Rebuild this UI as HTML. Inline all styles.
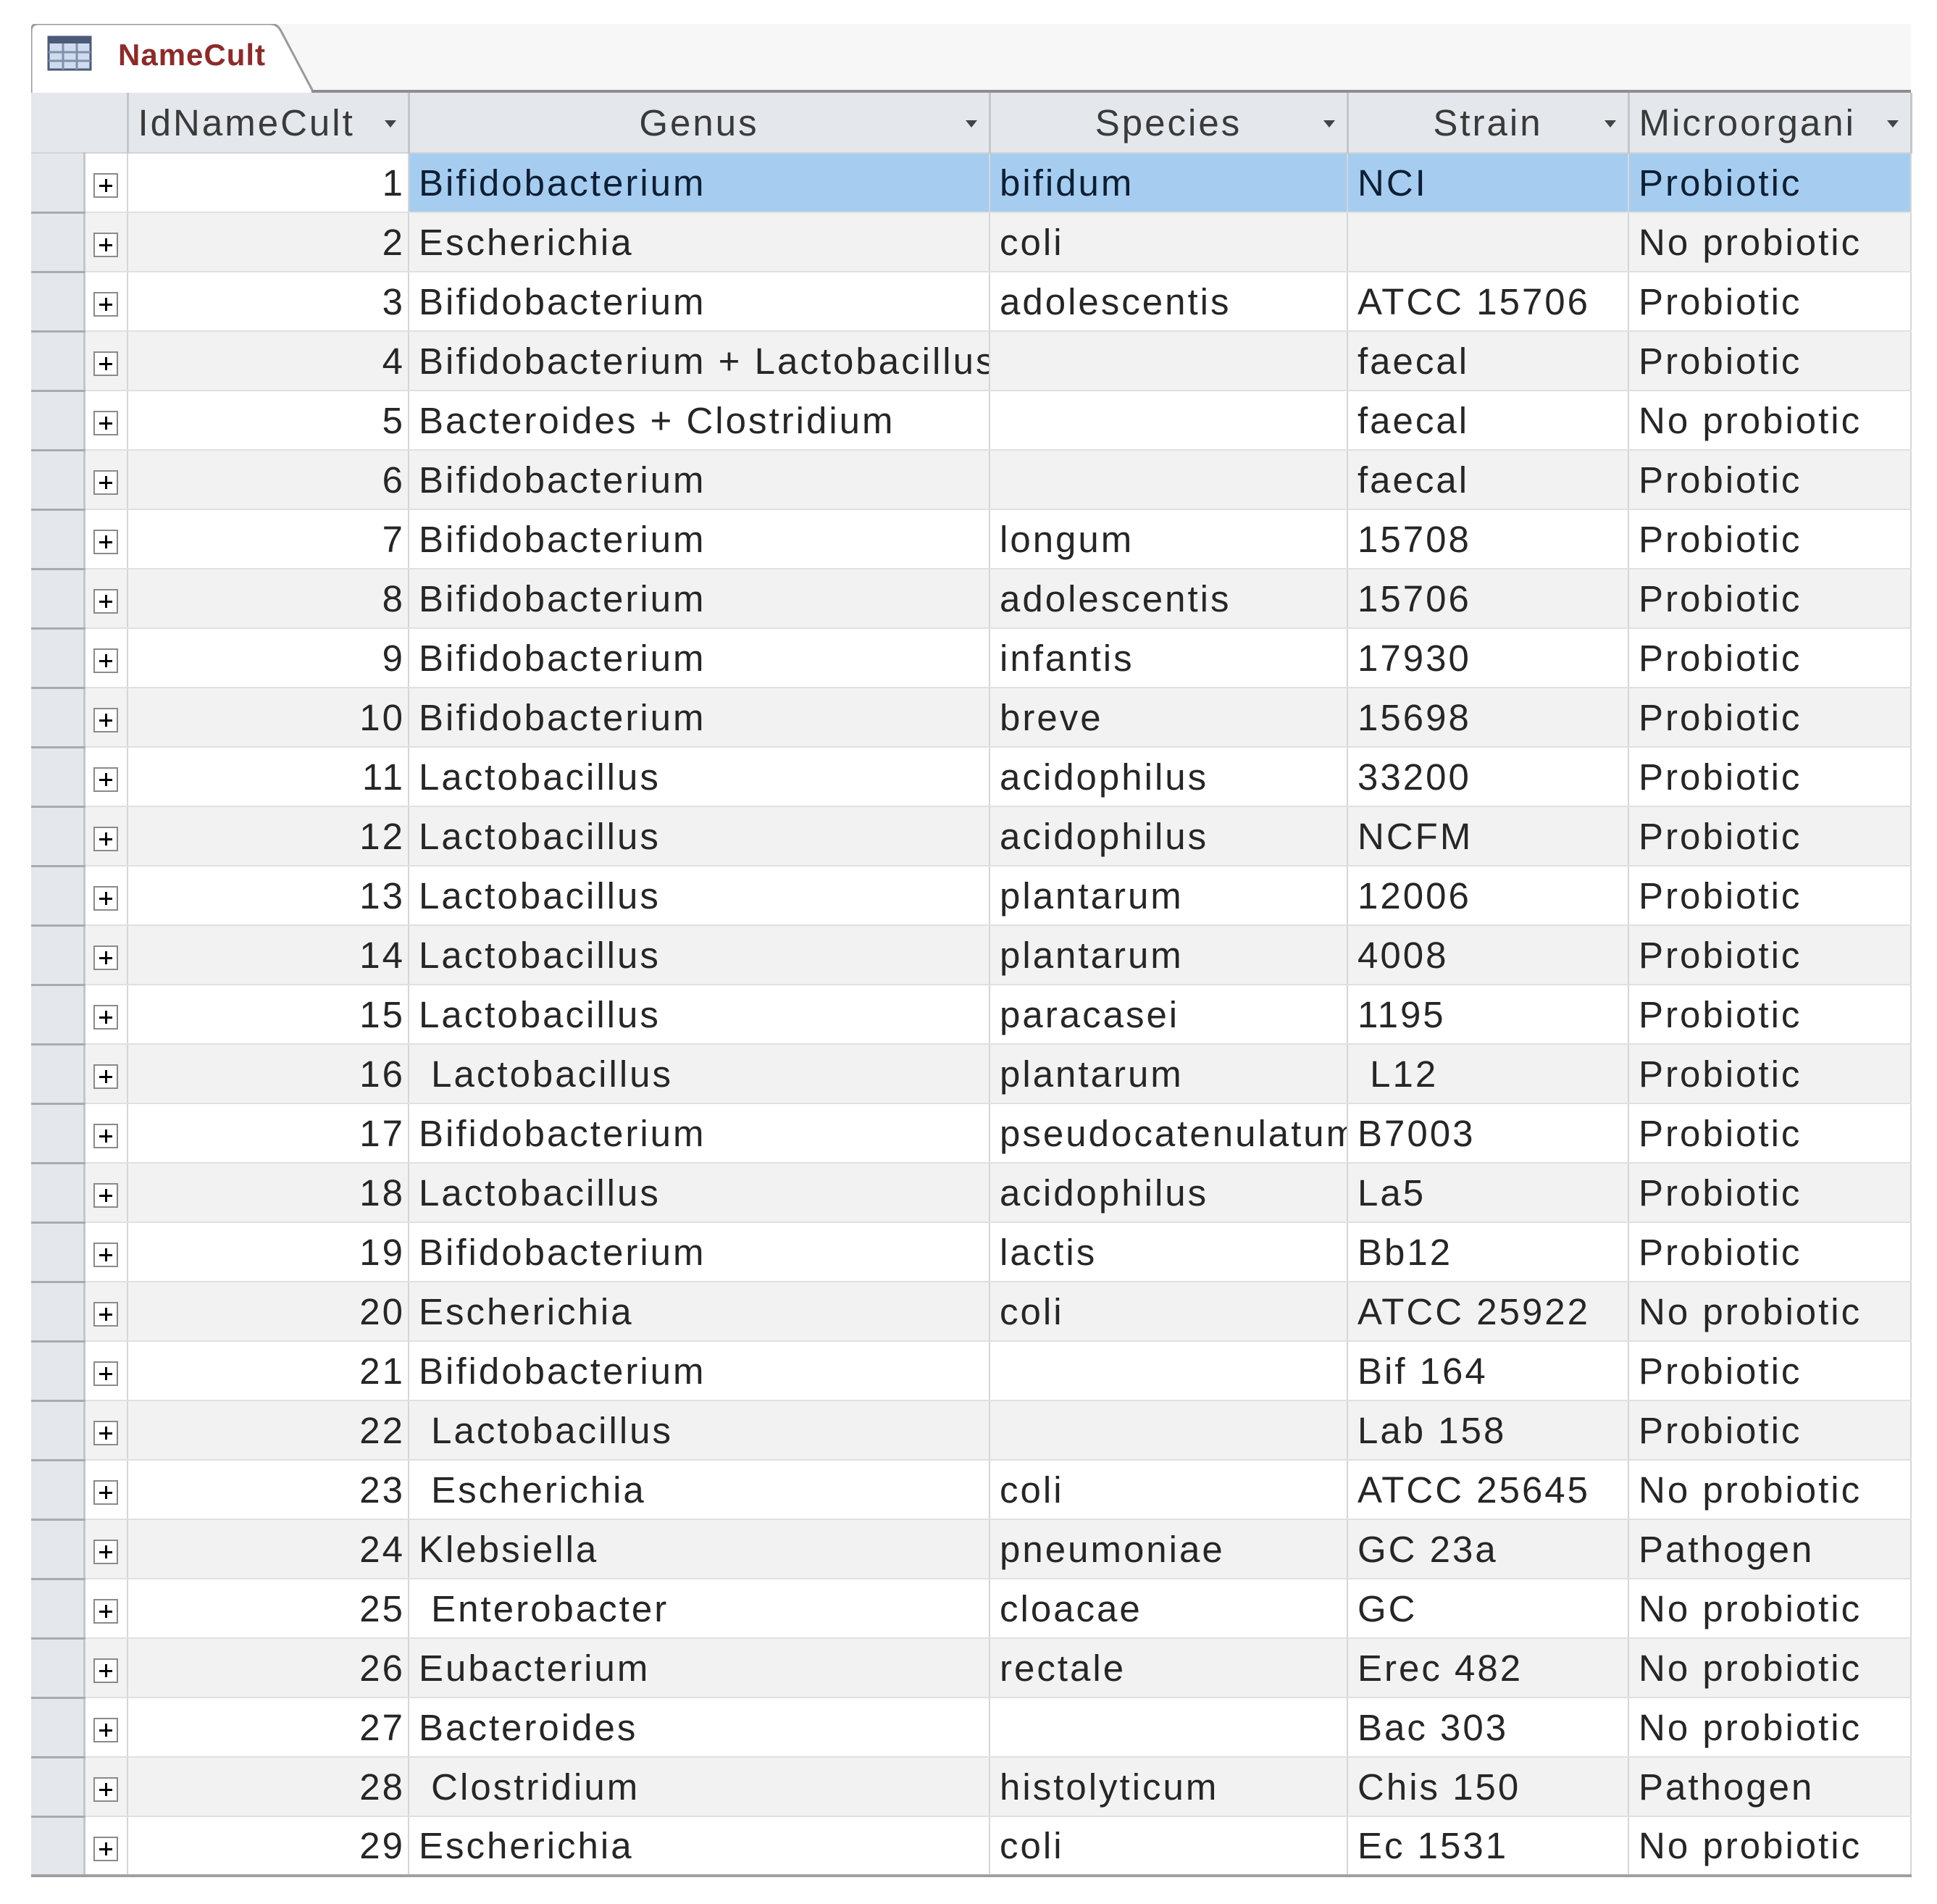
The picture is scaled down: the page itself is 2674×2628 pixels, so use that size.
<!DOCTYPE html>
<html><head><meta charset="utf-8"><style>
body{margin:0;width:2674px;height:2628px;background:#fff;position:relative;overflow:hidden;font-family:"Liberation Sans",sans-serif}
.tabbar{position:absolute;left:43px;top:33px;width:2595px;height:95px;background:#f7f7f7}
.tabline{position:absolute;left:430px;top:124px;width:2208px;height:4px;background:#8e8e8e}
.tab{position:absolute;left:43px;top:33px;width:390px;height:95px}
.tabtxt{position:absolute;left:163px;top:52px;font-size:42px;font-weight:bold;color:#8b2b2b;letter-spacing:1px}
table{position:absolute;left:43px;top:128px;border-collapse:collapse;table-layout:fixed;width:2595px}
td,th{padding:0;height:82px;font-size:51px;letter-spacing:3px;white-space:nowrap;overflow:hidden;color:#262626;font-weight:normal}
th{background:#e4e7ec;color:#3a3a3a;border-right:3px solid #c4c6c9;border-bottom:2px solid #d2d4d8;position:relative}
th.dd::after{content:"";position:absolute;right:16px;top:38px;border-left:8px solid transparent;border-right:8px solid transparent;border-top:10px solid #444}
td{border-right:2px solid #d6d6d6;border-bottom:2px solid #e0e0e0;padding-left:13px;box-sizing:border-box;text-overflow:clip}
td.sel{background:#e4e7ec;border-right:3px solid #c4c6c9;border-bottom:3px solid #a9abae;padding:0}
td.ex{padding:0;text-align:center}
td.id{text-align:right;padding-right:4px;padding-left:0}
.b{display:inline-block;width:34px;height:34px;border:2px solid #8a8a8a;box-sizing:border-box;position:relative;vertical-align:middle;background:#fff}
.b::before{content:"";position:absolute;left:6px;top:14px;width:18px;height:3px;background:#000}
.b::after{content:"";position:absolute;left:13.5px;top:6px;width:3px;height:18px;background:#000}
tr:nth-child(odd) td{background:#f2f2f2}
tr:nth-child(even) td{background:#fff}
tr td.sel{background:#e4e7ec!important}
tr.hl td.c{background:#a6cdf0!important;color:#0d1f35}
</style></head><body>
<div class="tabbar"></div>
<svg class="tab" width="390" height="95" viewBox="0 0 390 95"><path d="M0 95 V10 Q0 0 10 0 H330 Q340 0 345 10 L390 95" fill="#fff" stroke="#9a9a9a" stroke-width="3"/>
<rect x="24" y="18" width="58" height="45" fill="#cfdcef" stroke="#4b5a78" stroke-width="3"/><rect x="24" y="18" width="58" height="9" fill="#4b5a78"/>
<path d="M24 39H82M24 51H82M44 27V63M63 27V63" stroke="#8290a8" stroke-width="3"/></svg>
<div class="tabline"></div>
<div class="tabtxt">NameCult</div>
<table>
<colgroup><col style="width:73px"><col style="width:60px"><col style="width:388px"><col style="width:802px"><col style="width:494px"><col style="width:388px"><col style="width:390px"></colgroup>
<tr><th style="border-right:none"></th><th></th><th class="dd" style="text-align:left;padding-left:13px">IdNameCult</th><th class="dd">Genus</th><th class="dd">Species</th><th class="dd">Strain</th><th class="dd" style="text-align:left;padding-left:13px">Microorgani</th></tr>
<tr class="hl"><td class="sel"></td><td class="ex"><span class="b"></span></td><td class="id">1</td><td class="c">Bifidobacterium</td><td class="c">bifidum</td><td class="c">NCI</td><td class="c">Probiotic</td></tr>
<tr><td class="sel"></td><td class="ex"><span class="b"></span></td><td class="id">2</td><td>Escherichia</td><td>coli</td><td></td><td>No probiotic</td></tr>
<tr><td class="sel"></td><td class="ex"><span class="b"></span></td><td class="id">3</td><td>Bifidobacterium</td><td>adolescentis</td><td>ATCC 15706</td><td>Probiotic</td></tr>
<tr><td class="sel"></td><td class="ex"><span class="b"></span></td><td class="id">4</td><td>Bifidobacterium + Lactobacillus</td><td></td><td>faecal</td><td>Probiotic</td></tr>
<tr><td class="sel"></td><td class="ex"><span class="b"></span></td><td class="id">5</td><td>Bacteroides + Clostridium</td><td></td><td>faecal</td><td>No probiotic</td></tr>
<tr><td class="sel"></td><td class="ex"><span class="b"></span></td><td class="id">6</td><td>Bifidobacterium</td><td></td><td>faecal</td><td>Probiotic</td></tr>
<tr><td class="sel"></td><td class="ex"><span class="b"></span></td><td class="id">7</td><td>Bifidobacterium</td><td>longum</td><td>15708</td><td>Probiotic</td></tr>
<tr><td class="sel"></td><td class="ex"><span class="b"></span></td><td class="id">8</td><td>Bifidobacterium</td><td>adolescentis</td><td>15706</td><td>Probiotic</td></tr>
<tr><td class="sel"></td><td class="ex"><span class="b"></span></td><td class="id">9</td><td>Bifidobacterium</td><td>infantis</td><td>17930</td><td>Probiotic</td></tr>
<tr><td class="sel"></td><td class="ex"><span class="b"></span></td><td class="id">10</td><td>Bifidobacterium</td><td>breve</td><td>15698</td><td>Probiotic</td></tr>
<tr><td class="sel"></td><td class="ex"><span class="b"></span></td><td class="id">11</td><td>Lactobacillus</td><td>acidophilus</td><td>33200</td><td>Probiotic</td></tr>
<tr><td class="sel"></td><td class="ex"><span class="b"></span></td><td class="id">12</td><td>Lactobacillus</td><td>acidophilus</td><td>NCFM</td><td>Probiotic</td></tr>
<tr><td class="sel"></td><td class="ex"><span class="b"></span></td><td class="id">13</td><td>Lactobacillus</td><td>plantarum</td><td>12006</td><td>Probiotic</td></tr>
<tr><td class="sel"></td><td class="ex"><span class="b"></span></td><td class="id">14</td><td>Lactobacillus</td><td>plantarum</td><td>4008</td><td>Probiotic</td></tr>
<tr><td class="sel"></td><td class="ex"><span class="b"></span></td><td class="id">15</td><td>Lactobacillus</td><td>paracasei</td><td>1195</td><td>Probiotic</td></tr>
<tr><td class="sel"></td><td class="ex"><span class="b"></span></td><td class="id">16</td><td>&nbsp;Lactobacillus</td><td>plantarum</td><td>&nbsp;L12</td><td>Probiotic</td></tr>
<tr><td class="sel"></td><td class="ex"><span class="b"></span></td><td class="id">17</td><td>Bifidobacterium</td><td>pseudocatenulatum</td><td>B7003</td><td>Probiotic</td></tr>
<tr><td class="sel"></td><td class="ex"><span class="b"></span></td><td class="id">18</td><td>Lactobacillus</td><td>acidophilus</td><td>La5</td><td>Probiotic</td></tr>
<tr><td class="sel"></td><td class="ex"><span class="b"></span></td><td class="id">19</td><td>Bifidobacterium</td><td>lactis</td><td>Bb12</td><td>Probiotic</td></tr>
<tr><td class="sel"></td><td class="ex"><span class="b"></span></td><td class="id">20</td><td>Escherichia</td><td>coli</td><td>ATCC 25922</td><td>No probiotic</td></tr>
<tr><td class="sel"></td><td class="ex"><span class="b"></span></td><td class="id">21</td><td>Bifidobacterium</td><td></td><td>Bif 164</td><td>Probiotic</td></tr>
<tr><td class="sel"></td><td class="ex"><span class="b"></span></td><td class="id">22</td><td>&nbsp;Lactobacillus</td><td></td><td>Lab 158</td><td>Probiotic</td></tr>
<tr><td class="sel"></td><td class="ex"><span class="b"></span></td><td class="id">23</td><td>&nbsp;Escherichia</td><td>coli</td><td>ATCC 25645</td><td>No probiotic</td></tr>
<tr><td class="sel"></td><td class="ex"><span class="b"></span></td><td class="id">24</td><td>Klebsiella</td><td>pneumoniae</td><td>GC 23a</td><td>Pathogen</td></tr>
<tr><td class="sel"></td><td class="ex"><span class="b"></span></td><td class="id">25</td><td>&nbsp;Enterobacter</td><td>cloacae</td><td>GC</td><td>No probiotic</td></tr>
<tr><td class="sel"></td><td class="ex"><span class="b"></span></td><td class="id">26</td><td>Eubacterium</td><td>rectale</td><td>Erec 482</td><td>No probiotic</td></tr>
<tr><td class="sel"></td><td class="ex"><span class="b"></span></td><td class="id">27</td><td>Bacteroides</td><td></td><td>Bac 303</td><td>No probiotic</td></tr>
<tr><td class="sel"></td><td class="ex"><span class="b"></span></td><td class="id">28</td><td>&nbsp;Clostridium</td><td>histolyticum</td><td>Chis 150</td><td>Pathogen</td></tr>
<tr style="border-bottom:4px solid #a0a0a0"><td class="sel"></td><td class="ex"><span class="b"></span></td><td class="id">29</td><td>Escherichia</td><td>coli</td><td>Ec 1531</td><td>No probiotic</td></tr>
</table>
</body></html>
